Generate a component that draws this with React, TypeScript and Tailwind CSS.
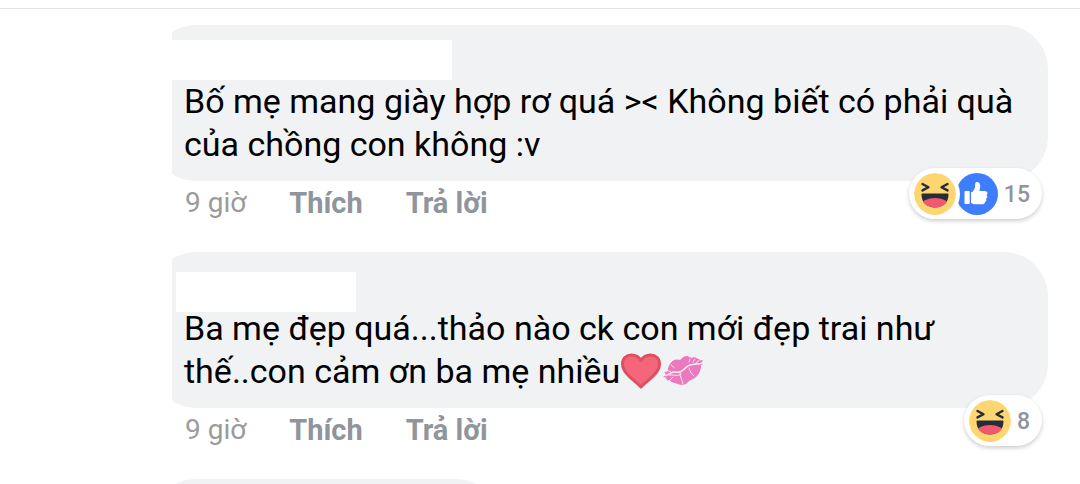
import { ReactNode } from 'react';

type Comment = {
  id: number;
  nameClass: string;
  text: ReactNode;
  time: string;
  reactions: ('haha' | 'like')[];
  count: number;
};

function HahaIcon() {
  return (
    <svg viewBox="0 0 42 42" className="relative z-10 size-[42px] rounded-full ring-4 ring-white" aria-hidden="true">
      <defs>
        <clipPath id="mouth">
          <path d="M7.500 21.500q0-1 1-1h25q1 0 1 1c0 8-5.500 13-13.500 13s-13.500-5-13.500-13z" />
        </clipPath>
      </defs>
      <circle cx="21" cy="21" r="21" fill="#fed671" />
      <path
        d="M8.500 11l6 3.200-6 3.200M33.500 11l-6 3.200 6 3.200"
        fill="none"
        stroke="#262c38"
        strokeWidth="2.400"
        strokeLinecap="round"
        strokeLinejoin="round"
      />
      <g clipPath="url(#mouth)">
        <rect x="7" y="20" width="28" height="15" fill="#262c38" />
        <ellipse cx="21" cy="32" rx="13.500" ry="7" fill="#f2596e" />
      </g>
    </svg>
  );
}

function LikeIcon() {
  return (
    <svg viewBox="0 0 42 42" className="size-[42px]" aria-hidden="true">
      <circle cx="21" cy="21" r="21" fill="#3f7dff" />
      <rect x="8.500" y="18" width="5.200" height="13" rx="0.800" fill="#fff" />
      <path
        d="M15 19.500c2.200-1 3.700-3.200 4-5.600l.2-3.200c.1-1.300 1-1.900 2.100-1.700 2.200.4 3.100 2.300 2.900 4.600l-.7 4.400h5.400c1.500 0 2.500 1 2.500 2.200 0 .9-.4 1.500-1 1.900.6.400.9 1 .9 1.700 0 1-.6 1.700-1.400 2 .4.400.6.900.5 1.500-.1.900-.7 1.500-1.500 1.700.2 1.300-.8 2.200-2.200 2.200h-6.500c-2 0-3.700-.5-5.200-1.500z"
        fill="#fff"
      />
    </svg>
  );
}

function Heart() {
  return (
    <svg viewBox="0 0 42 38" className="inline-block h-[38px] w-[42px] align-[-7px]" role="img" aria-label="heart">
      <path
        d="M21 35C16 29 2.500 22 2.500 12 2.500 6 6.500 3 11.500 3c4.500 0 7.500 2 9.500 5.500C23 5 26 3 30.500 3c5 0 9 3 9 9C39.500 22 26 29 21 35z"
        fill="#f4667a"
        stroke="#dd5064"
        strokeWidth="3"
        strokeLinejoin="round"
      />
    </svg>
  );
}

function Kiss() {
  return (
    <svg viewBox="0 0 42 38" className="inline-block h-[38px] w-[42px] align-[-7px]" role="img" aria-label="kiss mark">
      <path
        d="M1 25l3-2-1.500-3 3-.5C6 14 9 8.500 14 7.500c2-.4 3 .8 4.500.2C20 6 22 4 25 4c2 0 2.500 2 4.500 1.800C32 5 34 5 35 6.500l2 .5 1 1.500 3-.5-1.500 3 1.500 1-2 1.500c0 6-3 11-8 13.500-2.500 1.200-4.500 2-6 4-2.500 2.500-7 2.500-9.500.8C12 31.500 9.500 30 7.500 28L5 28.500l-1-3z"
        fill="#ec78be"
      />
      <g fill="none" stroke="#f1f2f4" strokeWidth="0.900" strokeLinecap="round">
        <path
          d="M4 23.500c3-1 5-3.500 8.500-3.500 2.500 0 4 1 6.500-.5 4-2 5-5.500 9-6.500 4-.8 7-1 12-1.500"
          strokeWidth="1.600"
        />
        <path d="M7 23c4-.5 8 1.500 12-.5M5 18l4 2M9 13l3 2.500M28 7l-1 3M33 7l-2 3M37 8.500L34 11M8 28l3-3M18 21c0 4 2 6 3 11M27 16c1 4 3 6 5 8" />
      </g>
    </svg>
  );
}

const comments: Comment[] = [
  {
    id: 1,
    nameClass: 'ml-5 w-[280px]',
    text: 'Bố mẹ mang giày hợp rơ quá >< Không biết có phải quà của chồng con không :v',
    time: '9 giờ',
    reactions: ['haha', 'like'],
    count: 15,
  },
  {
    id: 2,
    nameClass: 'mt-[5px] ml-6 w-[180px]',
    text: (
      <>
        Ba mẹ đẹp quá...thảo nào ck con mới đẹp trai như thế..con cảm ơn ba mẹ nhiều
        <Heart />
        <Kiss />
      </>
    ),
    time: '9 giờ',
    reactions: ['haha'],
    count: 8,
  },
];

function CommentItem({ comment }: { comment: Comment }) {
  return (
    <article>
      <div className="relative">
        <div className="overflow-hidden">
          <div className="-ml-5 rounded-[44px] bg-[#f1f2f4] py-[15px]">
            {/* hidden author name */}
            <div className="flow-root h-10">
              <div className={`h-10 bg-white ${comment.nameClass}`} />
            </div>
            <p className="pr-7 pl-8 text-[34px] leading-[43px] text-black">{comment.text}</p>
          </div>
        </div>
        <div className="absolute right-[6px] -bottom-[38px] flex h-[51px] items-center rounded-full bg-white pr-3 pl-[5px] shadow-[0_2px_4px_rgba(0,0,0,0.2)]">
          {comment.reactions.map((reaction) =>
            reaction === 'haha' ? <HahaIcon key={reaction} /> : <LikeIcon key={reaction} />
          )}
          <span className="ml-[6px] pt-[2px] text-[23px] leading-8 font-medium text-[#90949c]">{comment.count}</span>
        </div>
      </div>
      <footer className="flex h-[71px] items-start gap-[43px] pt-1 pl-[13px] text-[29px] leading-9 text-[#90949c]">
        <time className="text-[28px] text-[#9b9b9b]">{comment.time}</time>
        <button type="button" className="font-bold">
          Thích
        </button>
        <button type="button" className="font-bold">
          Trả lời
        </button>
      </footer>
    </article>
  );
}

export default function App() {
  return (
    <main className="h-screen overflow-hidden bg-white font-['Roboto','Noto_Sans',sans-serif]">
      <div className="h-[9px] border-b border-[#e3e4e6]" />
      <section className="mt-4 mr-8 ml-[172px]">
        {comments.map((comment) => (
          <CommentItem key={comment.id} comment={comment} />
        ))}
        <div className="overflow-hidden">
          <div className="-ml-5 h-24 w-[348px] rounded-[44px] bg-[#f1f2f4]" />
        </div>
      </section>
    </main>
  );
}
